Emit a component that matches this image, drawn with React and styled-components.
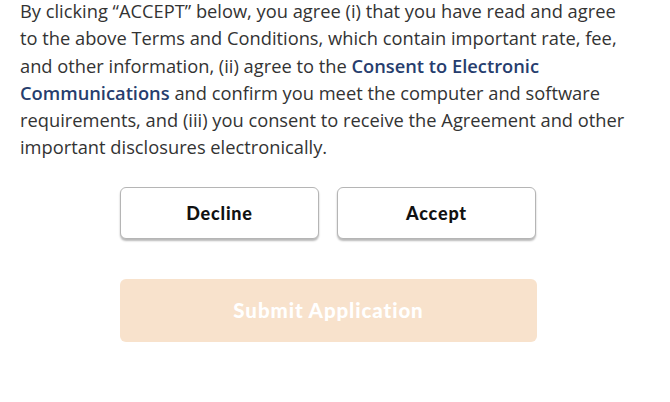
import React from "react";
import styled, { createGlobalStyle } from "styled-components";

const GlobalStyle = createGlobalStyle`
  body {
    margin: 0;
    background: #fff;
    font-family: "Open Sans", "Liberation Sans", sans-serif;
  }
`;

const Page = styled.div`
  width: 670px;
  padding: 0 20px;
  box-sizing: border-box;
`;

const Terms = styled.p`
  margin: -3px 0 0;
  width: 612px;
  font-size: 18.3px;
  line-height: 27.3px;
  color: #333;
`;

const TermsLink = styled.a`
  color: #263d6e;
  font-weight: 600;
  text-decoration: none;
`;

const Actions = styled.div`
  display: grid;
  grid-template-columns: 199px 199px;
  gap: 18px;
  margin: 26px 0 0 100px;
`;

const ChoiceButton = styled.button`
  height: 52px;
  border: 1px solid #b5b5b5;
  border-radius: 6px;
  background: #fff;
  box-shadow: 0 2px 2px rgba(0, 0, 0, 0.28);
  font-family: "Lato", "Liberation Sans", sans-serif;
  font-weight: 900;
  font-size: 18px;
  letter-spacing: 0.8px;
  color: #111;
  cursor: pointer;
`;

const SubmitButton = styled.button`
  display: block;
  width: 417px;
  height: 63px;
  margin: 40px 0 0 100px;
  border: none;
  border-radius: 6px;
  background: #f8e2cc;
  color: #fff;
  font-family: "Lato", "Liberation Sans", sans-serif;
  font-weight: 900;
  font-size: 20.5px;
  letter-spacing: 0.9px;
  cursor: not-allowed;
`;

export default function App() {
  return (
    <Page>
      <GlobalStyle />
      <Terms>
        By clicking “ACCEPT” below, you agree (i) that you have read and agree
        to the above Terms and Conditions, which contain important rate, fee,
        and other information, (ii) agree to the{" "}
        <TermsLink href="#">Consent to Electronic Communications</TermsLink>{" "}
        and confirm you meet the computer and software requirements, and (iii)
        you consent to receive the Agreement and other important disclosures
        electronically.
      </Terms>
      <Actions>
        <ChoiceButton>Decline</ChoiceButton>
        <ChoiceButton>Accept</ChoiceButton>
      </Actions>
      <SubmitButton disabled>Submit Application</SubmitButton>
    </Page>
  );
}
